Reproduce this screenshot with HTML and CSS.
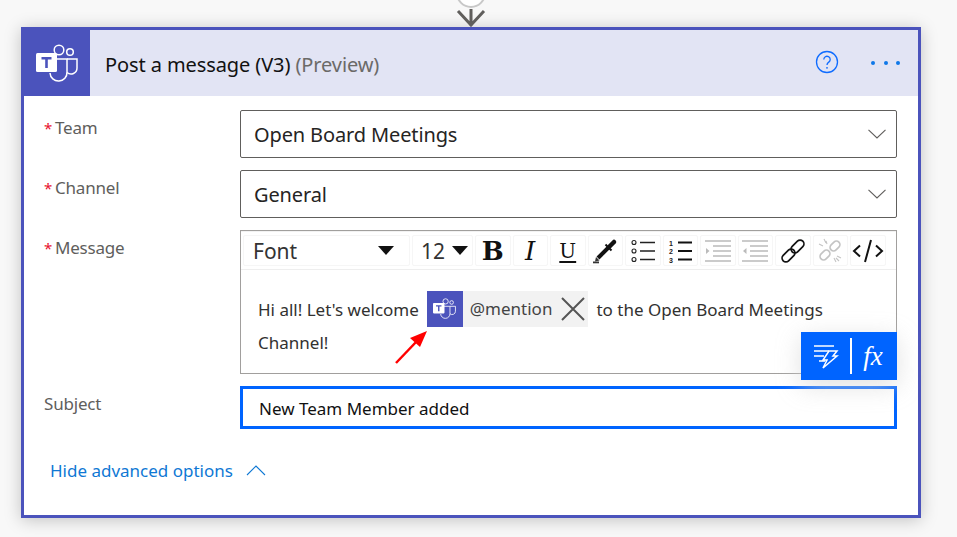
FILE: index.html
```html
<!DOCTYPE html>
<html lang="en">
<head>
<meta charset="utf-8">
<title>Post a message</title>
<link rel="stylesheet" href="styles.css">
</head>
<body>
<svg width="0" height="0" class="defs">
  <symbol id="teams" viewBox="0 0 42 38">
    <circle cx="23" cy="6" r="4.800" fill="none" stroke="#fff" stroke-width="1.500"/>
    <circle cx="34" cy="8" r="3.300" fill="none" stroke="#fff" stroke-width="1.500"/>
    <path d="M15 15h16v13a8.500 8.500 0 0 1-17 1" fill="none" stroke="#fff" stroke-width="1.500"/>
    <path d="M31 15h10v9a6 6 0 0 1-10 4.500" fill="none" stroke="#fff" stroke-width="1.500"/>
    <rect x="0" y="9" width="21" height="19" rx="1.500" fill="#fff"/>
    <path d="M5.500 13h10v2.400h-3.700v8.600h-2.600v-8.600h-3.700z" fill="#4b53bc"/>
  </symbol>
</svg>
<div class="connector">
  <svg width="40" height="27" viewBox="0 0 40 27">
    <circle cx="20" cy="-7" r="14" fill="#fff" stroke="#c8c8c8" stroke-width="2"/>
    <path d="M20 9v17M7 11l13 14 13-14" fill="none" stroke="#605e5c" stroke-width="3"/>
  </svg>
</div>
<main class="card">
  <header class="card-head">
    <div class="logo"><svg width="42" height="38"><use href="#teams"/></svg></div>
    <h1 class="title">Post a message (V3) <span class="preview">(Preview)</span></h1>
    <svg class="help" width="24" height="24" viewBox="0 0 24 24">
      <circle cx="12" cy="12" r="10.500" fill="none" stroke="#0f6cff" stroke-width="1.300"/>
      <path d="M8.800 9.500a3.200 3.200 0 1 1 5 2.600c-1.200.8-1.800 1.400-1.800 3" fill="none" stroke="#0f6cff" stroke-width="1.300"/>
      <circle cx="12" cy="17.800" r=".9" fill="#0f6cff"/>
    </svg>
    <div class="more"><i></i><i></i><i></i></div>
  </header>
  <section class="form">
    <div class="row">
      <div class="label"><span class="req">*</span>Team</div>
      <div class="select"><span>Open Board Meetings</span>
        <svg width="18" height="10" viewBox="0 0 18 10"><path d="M.5.800 9 9 17.500.8" fill="none" stroke="#605e5c" stroke-width="1.100"/></svg>
      </div>
    </div>
    <div class="row">
      <div class="label"><span class="req">*</span>Channel</div>
      <div class="select"><span>General</span>
        <svg width="18" height="10" viewBox="0 0 18 10"><path d="M.5.800 9 9 17.500.8" fill="none" stroke="#605e5c" stroke-width="1.100"/></svg>
      </div>
    </div>
    <div class="row">
      <div class="label"><span class="req">*</span>Message</div>
      <div class="editor">
        <div class="toolbar">
          <div class="tool tool-font"><span>Font</span><b class="caret"></b></div>
          <div class="tool tool-size"><span>12</span><b class="caret"></b></div>
          <div class="tool tool-b">B</div>
          <div class="tool tool-i">I</div>
          <div class="tool tool-u">U</div>
          <div class="tool"><svg width="26" height="26" viewBox="0 0 26 26"><path d="M6 20 16.500 9.500" stroke="#111" stroke-width="4"/><path d="M3 23.500l1-4.500 3.500 3.500z" fill="#333"/><path d="M17.500 8.500 22 4" stroke="#111" stroke-width="4.500" stroke-linecap="round"/><path d="M13.500 6.500l6 6" stroke="#111" stroke-width="2"/><rect x="1" y="23.500" width="6" height="1.800" fill="#333"/></svg></div>
          <div class="tool"><svg width="26" height="24" viewBox="0 0 26 24"><g fill="none" stroke="#222" stroke-width="1.100"><circle cx="4" cy="3.500" r="2"/><circle cx="4" cy="12" r="2"/><circle cx="4" cy="20.500" r="2"/></g><path d="M10 3.500h15M10 12h15M10 20.500h15" stroke="#222" stroke-width="1.500"/></svg></div>
          <div class="tool"><svg class="numbers" width="26" height="24" viewBox="0 0 26 24"><path d="M11 3.500h14M11 12h14M11 20.500h14" stroke="#111" stroke-width="2"/><text x="4" y="6.500" class="num">1</text><text x="4" y="15" class="num">2</text><text x="4" y="23.500" class="num">3</text></svg></div>
          <div class="tool"><svg width="28" height="22" viewBox="0 0 28 22"><path d="M1 1h26M9 6h18M9 11h18M9 16h18M1 21h26" stroke="#bbb" stroke-width="1.600"/><path d="M2 8l3.500 3L2 14z" fill="#bbb"/></svg></div>
          <div class="tool"><svg width="28" height="22" viewBox="0 0 28 22"><path d="M1 1h26M9 6h18M9 11h18M9 16h18M1 21h26" stroke="#bbb" stroke-width="1.600"/><path d="M5.500 8 2 11l3.500 3z" fill="#bbb"/></svg></div>
          <div class="tool"><svg width="24" height="24" viewBox="0 0 24 24"><g fill="none" stroke="#111" stroke-width="1.700"><rect x="-3.800" y="-7.500" width="7.600" height="15" rx="3.800" transform="translate(16.500 7.500) rotate(45)"/><rect x="-3.800" y="-7.500" width="7.600" height="15" rx="3.800" transform="translate(7.500 16.500) rotate(45)"/></g></svg></div>
          <div class="tool"><svg width="24" height="25" viewBox="0 0 24 25"><g fill="none" stroke="#c4c4c4" stroke-width="1.700"><rect x="-3.500" y="-5.500" width="7" height="11" rx="3.500" transform="translate(17 8) rotate(45)"/><rect x="-3.500" y="-5.500" width="7" height="11" rx="3.500" transform="translate(7 17) rotate(45)"/></g><path d="M6 1l2 4M1 6l4 2M8 3 9 6M23 20l-4-2M18 24l-2-4M21 23l-3-3" fill="none" stroke="#c4c4c4" stroke-width="1.100"/></svg></div>
          <div class="tool"><svg width="32" height="24" viewBox="0 0 32 24"><path d="M8 6.500l-6 5.500 6 5.500M24 6.500l6 5.500-6 5.500" fill="none" stroke="#111" stroke-width="2"/><path d="M19 1l-6 22" stroke="#111" stroke-width="2"/></svg></div>
        </div>
        <div class="body">
          <div class="line">Hi all! Let's welcome
            <span class="chip">
              <span class="chip-logo"><svg width="23" height="21"><use href="#teams"/></svg></span>
              <span class="chip-text">@mention</span>
              <svg class="chip-x" width="26" height="26" viewBox="0 0 26 26"><path d="M2 2l22 22M24 2L2 24" stroke="#555" stroke-width="2"/></svg>
            </span>
            to the Open Board Meetings
          </div>
          <div class="line">Channel!</div>
          <svg class="arrow" width="36" height="38" viewBox="0 0 36 38"><path d="M2 36 23 14" stroke="#f00" stroke-width="2.500"/><path d="M33 4 26 20 16 11z" fill="#f00"/></svg>
        </div>
        <div class="dyn">
          <svg width="26" height="26" viewBox="0 0 26 26"><path d="M1 3h20M1 8h15M1 13h10M6 18h6" stroke="#fff" stroke-width="1.500"/><path d="M16 8h8l-4 5h4L10 25l4-8h-4z" fill="none" stroke="#fff" stroke-width="1.500"/></svg>
          <i class="dyn-sep"></i>
          <span class="fx">fx</span>
        </div>
      </div>
    </div>
    <div class="row">
      <div class="label">Subject</div>
      <div class="input">New Team Member added</div>
    </div>
  </section>
  <div class="advanced">Hide advanced options
    <svg width="20" height="11" viewBox="0 0 20 11"><path d="M1 10 10 1l9 9" fill="none" stroke="#0f78d4" stroke-width="1.100"/></svg>
  </div>
</main>
</body>
</html>
```
FILE: styles.css
```css
* { box-sizing: border-box; }
html, body { margin: 0; padding: 0; }
body {
  width: 957px;
  height: 537px;
  overflow: hidden;
  background: #f8f8f8;
  font-family: "Noto Sans", "Open Sans", sans-serif;
  color: #252423;
}
.defs { position: absolute; }
.connector { width: 900px; margin-left: 21px; height: 27px; display: flex; justify-content: center; }
.connector svg { display: block; }
.card {
  width: 900px;
  height: 491px;
  margin-left: 21px;
  border: 3px solid #4b53bc;
  background: #fff;
  box-shadow: 0 2px 16px rgba(0,0,0,.22);
}
.card-head { height: 66px; display: flex; align-items: center; background: #e2e4f4; }
.logo { width: 66px; height: 66px; background: #4b53bc; display: flex; align-items: center; justify-content: center; }
.logo svg { display: block; }
.title { flex: 1; margin: 0 0 0 15px; padding-top: 2px; font-size: 20px; font-weight: 400; color: #111; letter-spacing: -.1px; }
.preview { color: #6b6a68; }
.help { margin: 0 32px 2px 0; }
.more { display: flex; gap: 8.500px; margin: 0 18px 0 0; }
.more i { width: 4px; height: 4px; border-radius: 50%; background: #0f78e8; }
.form { padding: 14px 21px 0 20px; display: flex; flex-direction: column; gap: 12px; }
.row { display: flex; }
.label { width: 196px; font-size: 17px; color: #605e5c; padding-top: 5px; line-height: 25px; letter-spacing: -.2px; }
.req { display: inline-block; width: 11px; font-size: 15px; color: #e8112d; }
.select {
  flex: 1; height: 48px; border: 1px solid #605e5c; border-radius: 2px;
  display: flex; align-items: center; justify-content: space-between;
  padding: 0 10px 0 13px; font-size: 20px; color: #252423; letter-spacing: -.13px;
}
.editor { flex: 1; height: 144px; border: 1px solid #a19f9d; position: relative; }
.toolbar { height: 39px; padding: 3px 2px; display: flex; gap: 2px; border-top: 1px solid #f2f2f2; border-bottom: 1px solid #eee; }
.tool {
  width: 35.500px; height: 31px; border: 1px solid #f6f6f6; border-radius: 2px;
  display: flex; align-items: center; justify-content: center; color: #111;
}
.tool-font { width: 167px; justify-content: space-between; padding: 0 15px 0 9px; font-size: 21px; color: #333; }
.tool-size { width: 61px; justify-content: space-between; padding: 0 4px 0 8px; font-size: 21px; color: #333; }
.caret { width: 0; height: 0; border-left: 8px solid transparent; border-right: 8px solid transparent; border-top: 9px solid #111; }
.tool-b { font: 700 26px "DejaVu Serif", serif; }
.tool-i { font: italic 400 26px "DejaVu Serif", serif; }
.tool-u { font: 400 20px "DejaVu Serif", serif; text-decoration: underline; text-underline-offset: 3px; text-decoration-thickness: 2px; }
.num { font: 700 7px "Liberation Sans", sans-serif; text-anchor: middle; fill: #222; }
.body { position: relative; padding: 23px 17px 0; font-size: 17px; color: #323130; }
.line { line-height: 36px; height: 33px; white-space: nowrap; display: flex; align-items: center; gap: 8px; }
.chip { height: 36px; display: inline-flex; align-items: center; background: #f2f2f2; margin-top: -2px; }
.chip-logo { width: 36px; height: 36px; background: #4b53bc; display: flex; align-items: center; justify-content: center; }
.chip-logo svg { display: block; }
.chip-text { margin-left: 7px; color: #444; }
.chip-x { margin: 0 2px 0 8px; }
.arrow { position: absolute; left: 153px; top: 57px; }
.dyn {
  position: absolute; right: -1px; top: 101px; width: 96px; height: 48px;
  background: #0064ff; display: flex; align-items: center; justify-content: center; gap: 11px; padding-right: 2px;
  box-shadow: 0 6px 24px rgba(215,215,215,.75);
}
.dyn-sep { width: 2px; height: 36px; background: #fff; }
.fx { font: italic 400 27px "Liberation Serif", serif; color: #fff; }
.input {
  flex: 1; height: 43px; border: 3px solid #0064ff;
  font-size: 17px; color: #111; padding: 1px 16px 0; display: flex; align-items: center;
}
.advanced { margin: 30px 0 0 26px; font-size: 17px; color: #0f78d4; display: flex; align-items: center; gap: 13px; }
```
